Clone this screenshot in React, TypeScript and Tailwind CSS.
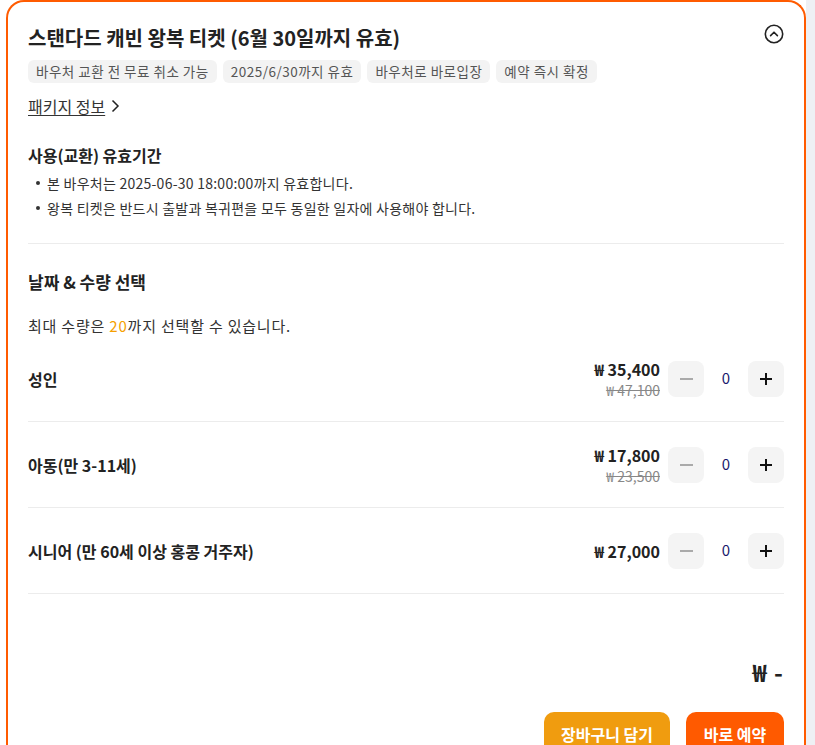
import { useState } from "react";

const tags = ["바우처 교환 전 무료 취소 가능", "2025/6/30까지 유효", "바우처로 바로입장", "예약 즉시 확정"];

const options = [
    { name: "성인", price: "₩ 35,400", original: "₩ 47,100" },
    { name: "아동(만 3-11세)", price: "₩ 17,800", original: "₩ 23,500" },
    { name: "시니어 (만 60세 이상 홍콩 거주자)", price: "₩ 27,000", original: "" },
];

function ChevronCircle() {
    return (
        <svg width="20" height="20" viewBox="0 0 20 20" fill="none" stroke="#222" strokeWidth="1.6" strokeLinecap="round" strokeLinejoin="round">
            <circle cx="10" cy="10" r="8.7" />
            <path d="M6.6 11.6 10 8.2l3.4 3.4" />
        </svg>
    );
}

function App() {
    const [counts, setCounts] = useState([0, 0, 0]);

    const change = (i: number, d: number) => {
        setCounts(prev => prev.map((c, idx) => (idx === i ? Math.min(20, Math.max(0, c + d)) : c)));
    };

    return (
        <div className="flex h-[745px] overflow-hidden bg-white pl-[6px] font-['Noto_Sans_CJK_KR','Noto_Sans',sans-serif] text-[#222]">
            <div className="flex w-[800px] shrink-0 flex-col rounded-t-[18px] border-2 border-b-0 border-[#ff5b00] px-5 pt-[18px]">
                <div className="flex items-start justify-between">
                    <h1 className="text-[20px] font-semibold leading-[36px]">스탠다드 캐빈 왕복 티켓 (6월 30일까지 유효)</h1>
                    <button className="mt-[4px]"><ChevronCircle /></button>
                </div>
                <div className="mt-[4px] flex gap-[6px]">
                    {tags.map(t => (
                        <span key={t} className="rounded-md bg-[#f3f3f3] px-[8px] text-[13.5px] leading-[23px] tracking-[0.5px] text-[#555]">{t}</span>
                    ))}
                </div>
                <a href="#" className="mt-[12px] flex items-center gap-1 self-start text-[16px] leading-[22px] text-[#333]">
                    <span className="underline underline-offset-2">패키지 정보</span>
                    <svg width="12" height="14" viewBox="0 0 12 14" fill="none" stroke="#222" strokeWidth="1.5"><path d="M3.5 1.5 9 7l-5.5 5.5" /></svg>
                </a>

                <h2 className="mt-[26px] text-[16px] font-semibold leading-[24px]">사용(교환) 유효기간</h2>
                <ul className="mt-[6px] flex flex-col gap-[5px] text-[14px] leading-[20px] tracking-[0.25px] text-[#333]">
                    <li className="flex items-center gap-[7px] pl-[8px]"><span className="h-1 w-1 rounded-full bg-[#333]" />본 바우처는 2025-06-30 18:00:00까지 유효합니다.</li>
                    <li className="flex items-center gap-[7px] pl-[8px]"><span className="h-1 w-1 rounded-full bg-[#333]" />왕복 티켓은 반드시 출발과 복귀편을 모두 동일한 일자에 사용해야 합니다.</li>
                </ul>
                <div className="mt-[25px] border-t border-[#ececec]" />

                <h2 className="mt-[26px] text-[17px] font-semibold leading-[24px]">날짜 &amp; 수량 선택</h2>
                <p className="mt-[22px] text-[15px] leading-[20px] tracking-[0.8px] text-[#333]">최대 수량은 <span className="text-[#f5a000]">20</span>까지 선택할 수 있습니다.</p>

                {options.map((o, i) => (
                    <div key={o.name} className="flex min-h-[86px] items-center justify-between border-b border-[#ececec] py-[21px] first:pt-[20px] first:min-h-[85px]">
                        <span className="text-[16px] font-semibold">{o.name}</span>
                        <div className="flex items-center">
                            <div className="mr-[8px] flex flex-col items-end">
                                <span className="text-[16px] font-semibold leading-[22px]">{o.price}</span>
                                {o.original && <span className="text-[14px] leading-[20px] text-[#888] line-through">{o.original}</span>}
                            </div>
                            <button onClick={() => change(i, -1)} className="flex h-9 w-9 items-center justify-center rounded-lg bg-[#f4f4f4]">
                                <span className="block h-[2px] w-[13px] bg-[#aaa]" />
                            </button>
                            <span className="w-11 text-center text-[15px] text-[#1a1a6e]">{counts[i]}</span>
                            <button onClick={() => change(i, 1)} className="flex h-9 w-9 items-center justify-center rounded-lg bg-[#f4f4f4]">
                                <svg width="14" height="14" viewBox="0 0 14 14" stroke="#111" strokeWidth="2"><path d="M7 1v12M1 7h12" /></svg>
                            </button>
                        </div>
                    </div>
                ))}

                <div className="mt-[64px] self-end text-[24px] font-bold leading-[28px] tracking-[1px]">₩ -</div>
                <div className="mt-[26px] flex justify-end gap-4">
                    <button className="h-11 w-[126px] rounded-[10px] bg-[#f09c0f] text-[16px] font-bold text-white">장바구니 담기</button>
                    <button className="h-11 w-[98px] rounded-[10px] bg-[#ff5a00] text-[16px] font-bold text-white">바로 예약</button>
                </div>
            </div>
            <div className="flex-1 bg-[#eef0f4]" />
        </div>
    );
}

export default App;
